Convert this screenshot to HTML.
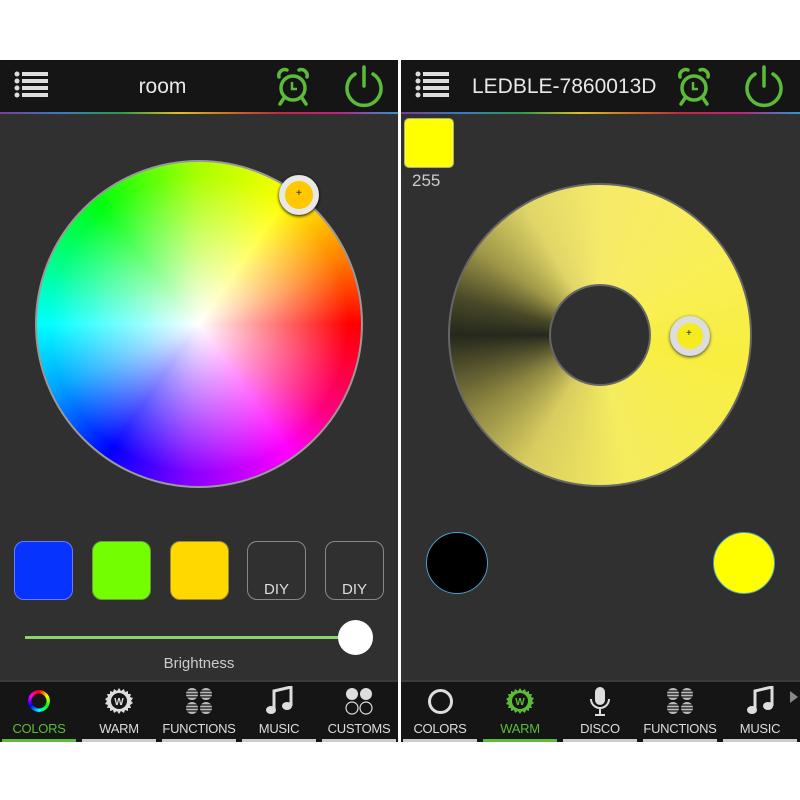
<!DOCTYPE html>
<html><head><meta charset="utf-8"><style>
*{margin:0;padding:0;box-sizing:border-box}
body{width:800px;height:800px;background:#fff;position:relative;overflow:hidden;font-family:"Liberation Sans",sans-serif}
.scr{position:absolute;top:60px;height:682px;background:#303030;overflow:hidden}
.hdr{position:absolute;left:0;top:0;right:0;height:52px;background:#151515}
.rb{position:absolute;left:0;right:0;top:52px;height:2px;background:linear-gradient(90deg,#7a3d9a 0,#3a7ac0 15%,#2a9a4a 30%,#e0c020 45%,#d0801a 55%,#c02a40 70%,#c02080 85%,#2a9ad0 100%)}
.nav{position:absolute;left:0;right:0;bottom:0;height:62px;background:#151515;border-top:2px solid #3a3a3a}
.tab{position:absolute;top:0;width:78px;height:60px;text-align:center;color:#ddd;font-size:13px}
.tab .l{position:absolute;bottom:6px;width:100%;text-align:center;letter-spacing:-0.3px}
.tab .u{position:absolute;bottom:0;left:2px;right:2px;height:3px;background:#ccc}
.g{color:#5dbb3a}.tab .u.gr{background:#5dbb3a}
.sw{position:absolute;top:481px;width:59px;height:59px;border-radius:10px;border:1px solid #888}
.diy{color:#ddd;font-size:15px;text-align:center;padding-top:39px}
</style></head><body>

<!-- LEFT -->
<div class="scr" style="left:0;width:398px">
 <div class="hdr">
  <svg style="position:absolute;left:14px;top:10px" width="36" height="30"><g fill="#ddd"><circle cx="3" cy="4" r="2.5"/><circle cx="3" cy="11" r="2.5"/><circle cx="3" cy="18" r="2.5"/><circle cx="3" cy="25" r="2.5"/><rect x="8" y="2" width="26" height="4"/><rect x="8" y="9" width="26" height="4"/><rect x="8" y="16" width="26" height="4"/><rect x="8" y="23" width="26" height="4"/></g></svg>
  <div style="position:absolute;left:0;width:325px;text-align:center;top:15px;color:#e8e8e8;font-size:21px">room</div>
  <svg style="position:absolute;left:274px;top:7px" width="38" height="40" viewBox="0 0 38 40" fill="none" stroke="#5dbb3a" stroke-width="3.5"><circle cx="19" cy="21" r="12"/><path d="M5 10a6 6 0 0 1 8-7M33 10a6 6 0 0 0-8-7M10 31l-4 6M28 31l4 6" stroke-linecap="round"/><path d="M18 15v7h5" stroke-width="2.5"/></svg>
  <svg style="position:absolute;left:343px;top:4px" width="42" height="44" viewBox="0 0 42 44" fill="none" stroke="#5dbb3a" stroke-width="3.5" stroke-linecap="round"><path d="M12 10a17 17 0 1 0 18 0"/><path d="M21 3v19"/></svg>
 </div>
 <div class="rb"></div>
 <div style="position:absolute;left:35px;top:100px;width:328px;height:328px;border-radius:50%;border:2px solid #999;background:radial-gradient(circle,rgba(255,255,255,1) 0,rgba(255,255,255,.6) 25%,rgba(255,255,255,0) 65%),conic-gradient(#aaff00 0deg,#ffff00 35deg,#ff8000 65deg,#ff0000 90deg,#ff0080 125deg,#ff00ff 145deg,#8000ff 185deg,#0000ff 215deg,#00a0ff 245deg,#00ffff 270deg,#00ff80 295deg,#00ff10 320deg,#aaff00 360deg)"></div>
 <div style="position:absolute;left:279px;top:115px;width:40px;height:40px;border-radius:50%;border:6px solid #e8e8e8;background:#ffc800;box-shadow:0 1px 3px #000"></div>
 <div style="position:absolute;left:296px;top:128px;color:#222;font-size:10px">+</div>
 <div class="sw" style="left:14px;background:#0733ff;border-color:#6a7aff"></div>
 <div class="sw" style="left:92px;background:#74ff00;border-color:#6a9a3a"></div>
 <div class="sw" style="left:170px;background:#ffd800;border-color:#a08a30"></div>
 <div class="sw diy" style="left:247px">DIY</div>
 <div class="sw diy" style="left:325px">DIY</div>
 <div style="position:absolute;left:25px;top:576px;width:330px;height:3px;background:#8bd36a"></div>
 <div style="position:absolute;left:338px;top:560px;width:35px;height:35px;border-radius:50%;background:#fff"></div>
 <div style="position:absolute;left:0;width:398px;text-align:center;top:595px;color:#ccc;font-size:15px">Brightness</div>
 <div class="nav">
  <div class="tab" style="left:0"><div style="position:absolute;left:28px;top:8px;width:22px;height:22px;border-radius:50%;border:3px solid transparent;background:conic-gradient(red,yellow,lime,cyan,blue,magenta,red) border-box;-webkit-mask:radial-gradient(circle,transparent 7px,#000 8px)"></div><div class="l g">COLORS</div><div class="u gr"></div></div>
  <div class="tab" style="left:80px"><svg style="position:absolute;left:25px;top:5px" width="28" height="28" viewBox="0 0 28 28"><path d="M14 1l2 3 3-2 1 3 3-1 0 3 3 0-1 3 3 1-2 3 2 2-3 2 1 3-3 0 0 3-3-1-1 3-3-2-2 3-2-3-3 2-1-3-3 1 0-3-3 0 1-3-3-1 2-3-2-2 3-2-1-3 3 0 0-3 3 1 1-3 3 2z" fill="#ddd"/><circle cx="14" cy="14" r="8" fill="#151515"/><text x="14" y="18" text-anchor="middle" fill="#ddd" font-size="10" font-weight="bold" font-family="Liberation Sans">W</text></svg><div class="l">WARM</div><div class="u"></div></div>
  <div class="tab" style="left:160px"><svg style="position:absolute;left:25px;top:5px" width="28" height="28"><g fill="#bbb"><circle cx="7" cy="7" r="6"/><circle cx="21" cy="7" r="6"/><circle cx="7" cy="21" r="6"/><circle cx="21" cy="21" r="6"/></g><g stroke="#151515" stroke-width="1.2"><path d="M0 4h28M0 7h28M0 10h28M0 18h28M0 21h28M0 24h28"/></g></svg><div class="l">FUNCTIONS</div><div class="u"></div></div>
  <div class="tab" style="left:240px"><svg style="position:absolute;left:25px;top:4px" width="28" height="30"><path d="M9 24V5l17-4v19" stroke="#ddd" stroke-width="3" fill="none"/><ellipse cx="6" cy="24" rx="5" ry="4" fill="#ddd"/><ellipse cx="22" cy="20" rx="5" ry="4" fill="#ddd"/></svg><div class="l">MUSIC</div><div class="u"></div></div>
  <div class="tab" style="left:320px"><svg style="position:absolute;left:24px;top:5px" width="30" height="28"><circle cx="8" cy="7" r="6" fill="#ddd"/><circle cx="22" cy="7" r="6" fill="#ddd"/><circle cx="8" cy="21" r="6" fill="none" stroke="#ddd" stroke-width="1.2"/><circle cx="22" cy="21" r="6" fill="none" stroke="#ddd" stroke-width="1.2"/></svg><div class="l">CUSTOMS</div><div class="u"></div></div>
 </div>
</div>

<!-- RIGHT -->
<div class="scr" style="left:401px;width:399px">
 <div class="hdr">
  <svg style="position:absolute;left:14px;top:10px" width="36" height="30"><g fill="#ddd"><circle cx="3" cy="4" r="2.5"/><circle cx="3" cy="11" r="2.5"/><circle cx="3" cy="18" r="2.5"/><circle cx="3" cy="25" r="2.5"/><rect x="8" y="2" width="26" height="4"/><rect x="8" y="9" width="26" height="4"/><rect x="8" y="16" width="26" height="4"/><rect x="8" y="23" width="26" height="4"/></g></svg>
  <div style="position:absolute;left:71px;top:15px;color:#e8e8e8;font-size:21px">LEDBLE-7860013D</div>
  <svg style="position:absolute;left:274px;top:7px" width="38" height="40" viewBox="0 0 38 40" fill="none" stroke="#5dbb3a" stroke-width="3.5"><circle cx="19" cy="21" r="12"/><path d="M5 10a6 6 0 0 1 8-7M33 10a6 6 0 0 0-8-7M10 31l-4 6M28 31l4 6" stroke-linecap="round"/><path d="M18 15v7h5" stroke-width="2.5"/></svg>
  <svg style="position:absolute;left:342px;top:4px" width="42" height="44" viewBox="0 0 42 44" fill="none" stroke="#5dbb3a" stroke-width="3.5" stroke-linecap="round"><path d="M12 10a17 17 0 1 0 18 0"/><path d="M21 3v19"/></svg>
 </div>
 <div class="rb"></div>
 <div style="position:absolute;left:3px;top:58px;width:50px;height:50px;border-radius:5px;background:#ffff00;border:1px solid #aa9"></div>
 <div style="position:absolute;left:11px;top:111px;color:#ccc;font-size:17px">255</div>
 <div style="position:absolute;left:47px;top:123px;width:304px;height:304px;border-radius:50%;border:2px solid #666;background:conic-gradient(from -30deg,#e0d668 0deg,#f6ea6a 30deg,#f9ef55 90deg,#f8ee40 130deg,#f5ec60 200deg,#d8cc60 240deg,#8a8440 270deg,#25281c 300deg,#4a4a28 315deg,#a09848 335deg,#e0d668 360deg)"></div>
 <div style="position:absolute;left:148px;top:224px;width:102px;height:102px;border-radius:50%;background:#303030;border:2px solid #666"></div>
 <div style="position:absolute;left:269px;top:256px;width:40px;height:40px;border-radius:50%;border:7px solid #ddd;background:#f5ec20;box-shadow:0 1px 3px #333"></div>
 <div style="position:absolute;left:285px;top:268px;color:#222;font-size:10px">+</div>
 <div style="position:absolute;left:25px;top:472px;width:62px;height:62px;border-radius:50%;background:#000;border:1.5px solid #4aa0d0"></div>
 <div style="position:absolute;left:312px;top:472px;width:62px;height:62px;border-radius:50%;background:#ffff00;border:1.5px solid #4aa0d0"></div>
 <div class="nav">
  <div class="tab" style="left:0"><div style="position:absolute;left:27px;top:7px;width:25px;height:25px;border-radius:50%;border:3px solid #ddd"></div><div class="l">COLORS</div><div class="u"></div></div>
  <div class="tab" style="left:80px"><svg style="position:absolute;left:25px;top:5px" width="28" height="28" viewBox="0 0 28 28"><path d="M14 1l2 3 3-2 1 3 3-1 0 3 3 0-1 3 3 1-2 3 2 2-3 2 1 3-3 0 0 3-3-1-1 3-3-2-2 3-2-3-3 2-1-3-3 1 0-3-3 0 1-3-3-1 2-3-2-2 3-2-1-3 3 0 0-3 3 1 1-3 3 2z" fill="#5dbb3a"/><circle cx="14" cy="14" r="8" fill="#151515"/><text x="14" y="18" text-anchor="middle" fill="#5dbb3a" font-size="10" font-weight="bold" font-family="Liberation Sans">W</text></svg><div class="l g">WARM</div><div class="u gr"></div></div>
  <div class="tab" style="left:160px"><svg style="position:absolute;left:28px;top:4px" width="22" height="32"><rect x="6" y="1" width="10" height="18" rx="5" fill="#ddd"/><path d="M2 13a9 9 0 0 0 18 0M11 22v7M6 29h10" stroke="#ddd" stroke-width="2" fill="none"/></svg><div class="l">DISCO</div><div class="u"></div></div>
  <div class="tab" style="left:240px"><svg style="position:absolute;left:25px;top:5px" width="28" height="28"><g fill="#bbb"><circle cx="7" cy="7" r="6"/><circle cx="21" cy="7" r="6"/><circle cx="7" cy="21" r="6"/><circle cx="21" cy="21" r="6"/></g><g stroke="#151515" stroke-width="1.2"><path d="M0 4h28M0 7h28M0 10h28M0 18h28M0 21h28M0 24h28"/></g></svg><div class="l">FUNCTIONS</div><div class="u"></div></div>
  <div class="tab" style="left:320px"><svg style="position:absolute;left:25px;top:4px" width="28" height="30"><path d="M9 24V5l17-4v19" stroke="#ddd" stroke-width="3" fill="none"/><ellipse cx="6" cy="24" rx="5" ry="4" fill="#ddd"/><ellipse cx="22" cy="20" rx="5" ry="4" fill="#ddd"/></svg><div class="l">MUSIC</div><div class="u"></div></div>
  <svg style="position:absolute;left:388px;top:8px" width="10" height="14"><path d="M1 1l8 6-8 6z" fill="#888"/></svg>
 </div>
</div>
</body></html>
